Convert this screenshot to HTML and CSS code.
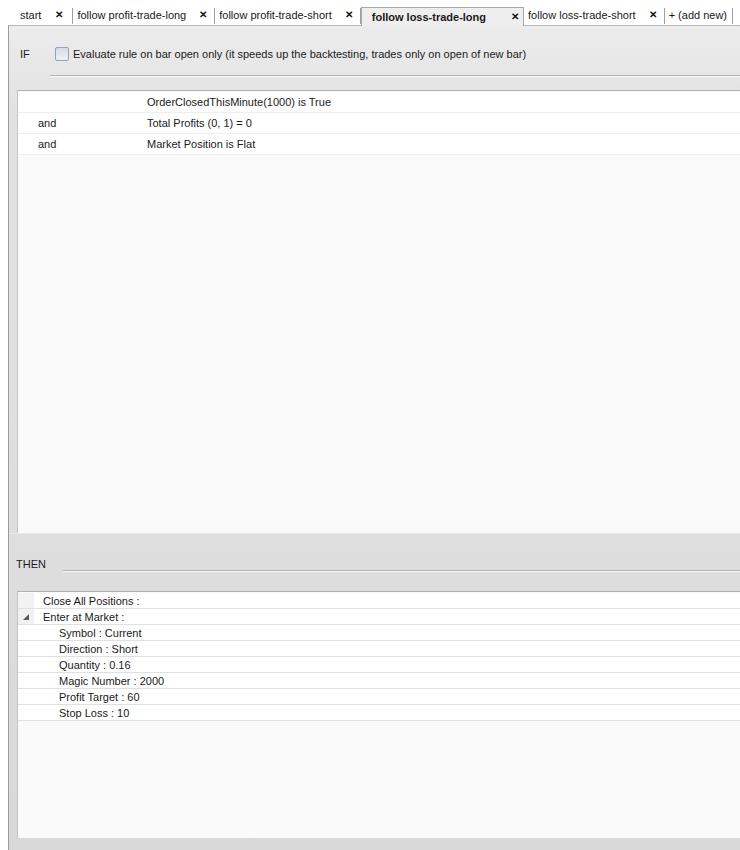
FILE: index.html
```html
<!DOCTYPE html>
<html lang="en">
<head>
  <meta charset="UTF-8" />
  <title>Strategy rules</title>
  <link rel="stylesheet" href="styles.css">
</head>
<body>
  <!-- ===== TABS ===== -->
  <nav class="tabs">
    <div class="tab first"><span>start</span><span class="close">&#x2715;</span></div>
    <div class="tab"><span>follow profit-trade-long</span><span class="close">&#x2715;</span></div>
    <div class="tab"><span>follow profit-trade-short</span><span class="close">&#x2715;</span></div>
    <div class="tab active"><span>follow loss-trade-long</span><span class="close">&#x2715;</span></div>
    <div class="tab"><span>follow loss-trade-short</span><span class="close">&#x2715;</span></div>
    <div class="tab add"><span>+ (add new)</span></div>
  </nav>

  <!-- ===== EDITOR ===== -->
  <main class="editor">
    <div class="if-bar">
      <span class="if-label">IF</span>
      <label class="check"><span class="box"></span>Evaluate rule on bar open only (it speeds up the backtesting, trades only on open of new bar)</label>
    </div>
    <div class="rule if-rule"></div>

    <section class="grid conditions">
      <div class="cond"><span class="op"></span><span>OrderClosedThisMinute(1000) is True</span></div>
      <div class="cond"><span class="op">and</span><span>Total Profits (0, 1) = 0</span></div>
      <div class="cond"><span class="op">and</span><span>Market Position is Flat</span></div>
    </section>

    <div class="then-bar">
      <span class="then-label">THEN</span>
      <div class="rule"></div>
    </div>

    <section class="grid actions">
      <div class="act"><span class="toggle"></span><span class="label">Close All Positions :</span></div>
      <div class="act"><span class="toggle"><svg width="6" height="6" viewBox="0 0 6 6"><polygon points="6,0 6,6 0,6" fill="#5a5a5a"/></svg></span><span class="label">Enter at Market :</span></div>
      <div class="act child"><span>Symbol : Current</span></div>
      <div class="act child"><span>Direction : Short</span></div>
      <div class="act child"><span>Quantity : 0.16</span></div>
      <div class="act child"><span>Magic Number : 2000</span></div>
      <div class="act child"><span>Profit Target : 60</span></div>
      <div class="act child"><span>Stop Loss : 10</span></div>
    </section>
  </main>
</body>
</html>
```

FILE: styles.css
```css
* { box-sizing: border-box; margin: 0; padding: 0; }

body {
  font-family: "Liberation Sans", Arial, sans-serif;
  font-size: 11px;
  color: #1a1a1a;
  background: #ffffff;
  width: 740px;
  overflow: hidden;
}

/* ===== TABS ===== */
.tabs {
  display: flex;
  align-items: flex-end;
  height: 25px;
  padding-left: 12px;
  background: #ffffff;
}
.tab {
  display: flex;
  align-items: center;
  height: 16px;
  padding: 0 7px 2px 4px;
  border-right: 1px solid #a0a0a0;
  margin-bottom: 1px;
  line-height: 14px;
  white-space: nowrap;
}
.tab.first { padding-left: 8px; padding-right: 9px; }
.tab .close {
  margin-left: 13px;
  font-size: 10px;
  font-weight: bold;
  color: #111111;
}
.tab.first .close { margin-left: 14px; }
.tab.active {
  height: 19px;
  margin-bottom: -1px;
  padding: 0 4px 0 10px;
  border: 1px solid #a8a8a8;
  border-bottom: none;
  background: #eeeeee;
  font-weight: bold;
  position: relative;
  z-index: 1;
}
.tab.active .close { margin-left: 25px; }
.tab.add { padding-right: 5px; }

/* ===== EDITOR ===== */
.editor {
  height: 825px;
  margin-left: 8px;
  border-left: 1px solid #9c9c9c;
  border-top: 1px solid #b8b8b8;
  background: linear-gradient(#ececec, #e2e2e2 10%, #dedede 60%, #d8d8d8);
  display: flex;
  flex-direction: column;
}

.rule {
  height: 2px;
  border-top: 1px solid #b4b4b4;
  border-bottom: 1px solid #f8f8f8;
}

.if-bar {
  display: flex;
  align-items: center;
  padding: 21px 0 0 11px;
  line-height: 14px;
}
.if-label { width: 35px; }
.check { display: flex; align-items: center; gap: 4px; }
.check .box {
  width: 14px;
  height: 14px;
  border: 1px solid #8ea4bd;
  border-radius: 2px;
  background: linear-gradient(#d6dde5, #eef1f4);
}
.if-rule { margin: 14px 0 13px 41px; }

.grid {
  margin-left: 8px;
  border-top: 1px solid #b0b0b0;
  border-left: 1px solid #c4c4c4;
  background: #fafafa;
  padding-top: 1px;
}
.conditions { height: 443px; }
.cond {
  display: flex;
  height: 21px;
  align-items: center;
  background: #ffffff;
  border-bottom: 1px solid #eeeeee;
}
.cond .op { width: 129px; padding-left: 20px; }

.then-bar {
  display: flex;
  align-items: flex-start;
  height: 58px;
  padding: 23px 0 0 7px;
  border-top: 1px solid #eaeaea;
  line-height: 14px;
}
.then-bar .rule { flex: 1; margin: 13px 0 0 17px; }

.actions { height: 247px; padding-top: 1px; }
.act {
  display: flex;
  align-items: center;
  height: 16px;
  background: #ffffff;
  border-bottom: 1px solid #e0e0e0;
}
.act .toggle {
  display: flex;
  align-items: center;
  justify-content: center;
  width: 16px;
  height: 100%;
  background: #f2f2f2;
}
.act .label { padding-left: 9px; }
.act.child { padding-left: 41px; }
```
